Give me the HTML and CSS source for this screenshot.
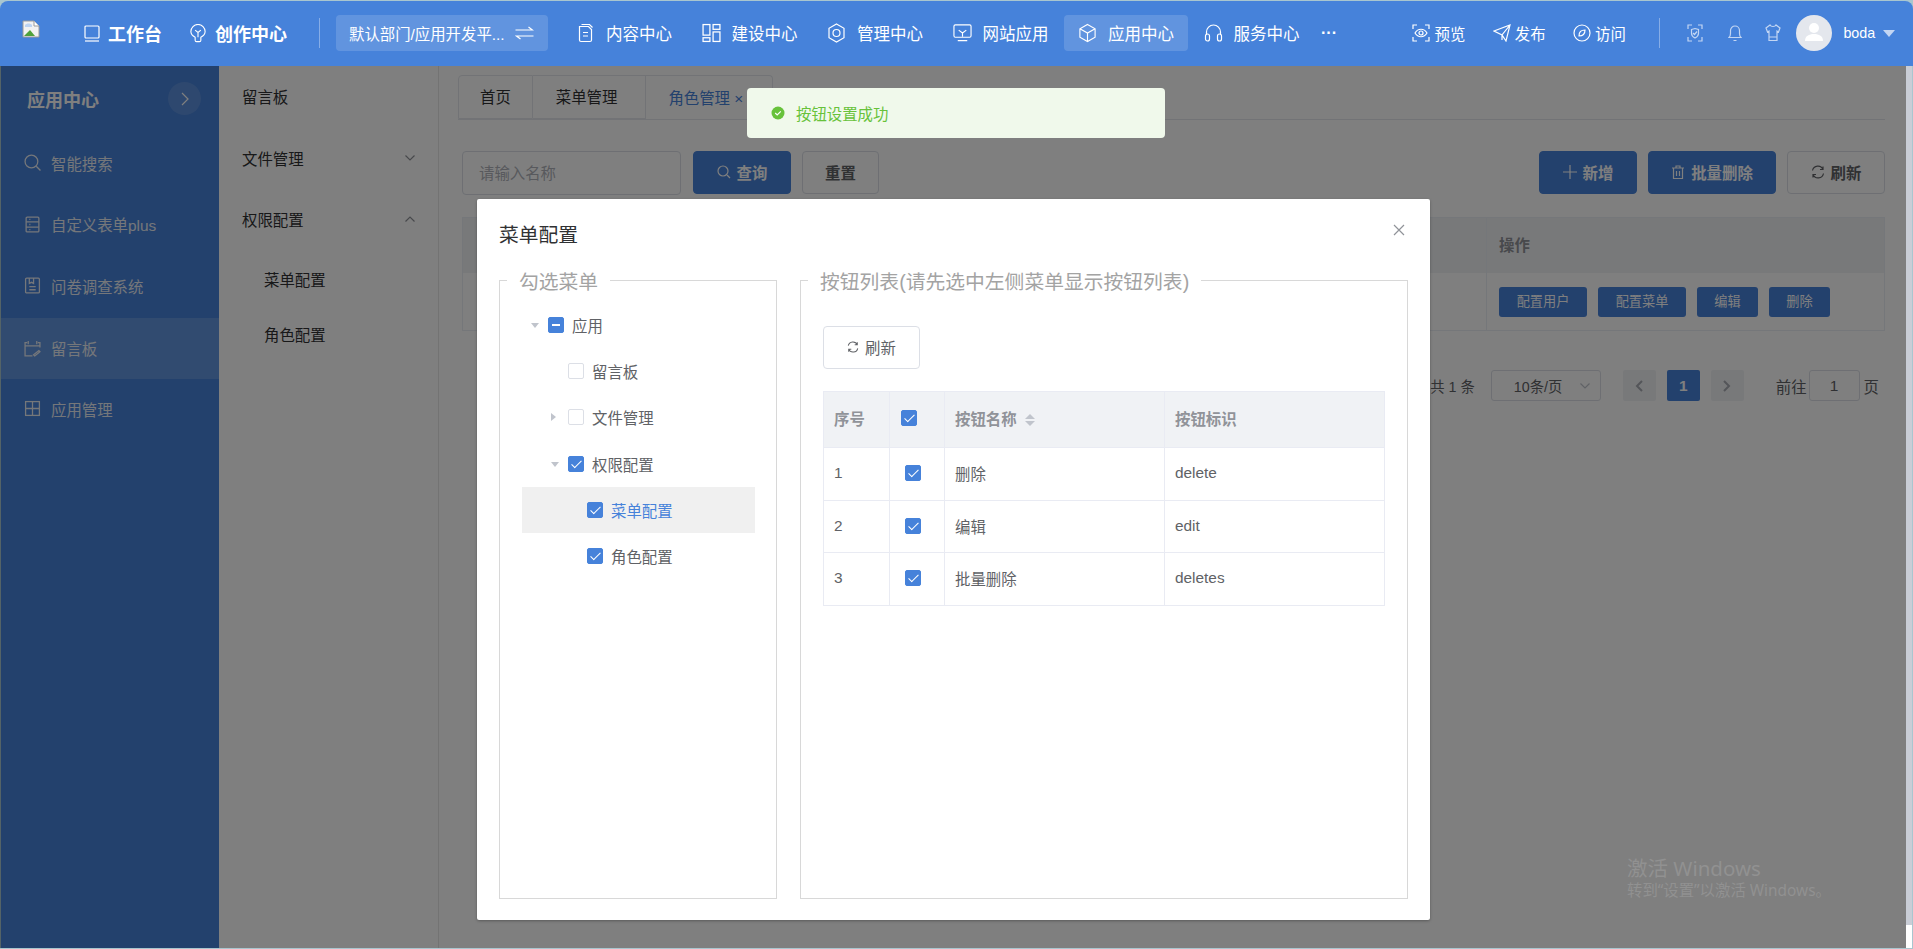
FILE: index.html
```html
<!DOCTYPE html>
<html lang="zh-CN">
<head>
    <meta charset="UTF-8">
    <title>菜单配置</title>
    <link rel="stylesheet" href="styles.css">
</head>
<body>
<div class="app">
    <header class="topbar">
        <svg class="logo" viewBox="0 0 18 18" width="18" height="18"><path d="M1 1h11l5 5v11H1z" fill="#f2f2f2" stroke="#9a9a9a"/><path d="M12 1v5h5" fill="#fff" stroke="#9a9a9a"/><path d="M2 16l6-6 5 6z" fill="#4fa13c"/><path d="M3 5c2-2 5-2 7 0v2H3z" fill="#bcd3f2"/></svg>
        <a class="top-main first"><svg class="ic" viewBox="0 0 18 18"><rect x="2" y="1.500" width="14" height="12" rx="1"/><path d="M2 16.500h14"/></svg>工作台</a>
        <a class="top-main"><svg class="ic" viewBox="0 0 18 20"><path d="M6 17v-3C3 12.500 1.500 10 1.500 8a7.500 7.500 0 0 1 15 0c0 2-1.500 4.500-4.500 6v3a1.500 1.500 0 0 1-1.500 1.500h-3A1.500 1.500 0 0 1 6 17zM9 14V9M6 6.500L9 9l3-2.500"/></svg>创作中心</a>
        <span class="top-line"></span>
        <div class="dept"><span>默认部门/应用开发平...</span><svg class="ic" viewBox="0 0 18 14"><path d="M0 4h17l-4-3M18 10H1l4 3"/></svg></div>
        <nav class="top-nav">
            <a><svg class="ic" viewBox="0 0 18 20"><path d="M3 3.500h9l3 3V17a1.500 1.500 0 0 1-1.500 1.500h-9A1.500 1.500 0 0 1 3 17zM5 1.500h8l3 3M6.500 9.500h5M6.500 13h5"/></svg>内容中心</a>
            <a><svg class="ic" viewBox="0 0 18 18"><rect x="1" y="1" width="6.500" height="10"/><rect x="10.500" y="1" width="6.500" height="4.500"/><rect x="1" y="13.500" width="6.500" height="3.500"/><rect x="10.500" y="8" width="6.500" height="9"/></svg>建设中心</a>
            <a><svg class="ic" viewBox="0 0 18 20"><path d="M9 1l7.500 4.300v9.400L9 19l-7.500-4.300V5.300z"/><circle cx="9" cy="10" r="3.500"/></svg>管理中心</a>
            <a><svg class="ic" viewBox="0 0 20 20"><rect x="1" y="1.500" width="18" height="13" rx="1.500"/><path d="M6 7l4 3 4-3M10 10v4M5 18h10"/></svg>网站应用</a>
            <a class="on"><svg class="ic" viewBox="0 0 20 20"><path d="M10 1l8 4.500v9L10 19l-8-4.500v-9zM2 5.500l8 4.500 8-4.500M10 10v9"/></svg>应用中心</a>
            <a><svg class="ic" viewBox="0 0 18 20"><path d="M2 12V9a7 7 0 0 1 14 0v3"/><rect x="1" y="11" width="4" height="7" rx="2"/><rect x="13" y="11" width="4" height="7" rx="2"/></svg>服务中心</a>
            <span class="dots">···</span>
        </nav>
        <div class="top-tools">
            <a><svg class="ic" viewBox="0 0 18 18"><path d="M1 5V1h4M13 1h4v4M17 13v4h-4M5 17H1v-4M3 9c3-5 9-5 12 0-3 5-9 5-12 0z"/><circle cx="9" cy="9" r="2"/></svg>预览</a>
            <a><svg class="ic" viewBox="0 0 18 18"><path d="M1 7L17 1l-4 16-4-6zM17 1L9 11v5"/></svg>发布</a>
            <a><svg class="ic" viewBox="0 0 18 18"><circle cx="9" cy="9" r="8"/><path d="M6 12c0-4 2-6 6-6 0 4-2 6-6 6z"/></svg>访问</a>
        </div>
        <span class="top-line second"></span>
        <svg class="ic dim shield" viewBox="0 0 16 18"><path d="M1 5V1h4M11 1h4v4M15 13v4h-4M5 17H1v-4M4.500 5.500L8 4.500l3.500 1v4C11.500 12 10 13 8 14c-2-1-3.500-2-3.500-4.500zM6 9l1.500 1.500L10 7.500"/></svg>
        <svg class="ic dim bell" viewBox="0 0 14 18"><path d="M1 13.500c1-1 1.500-2 1.500-4V6.500a4.500 4.500 0 0 1 9 0v3c0 2 .5 3 1.500 4zM5.500 16.500h3"/></svg>
        <svg class="ic dim shirt" viewBox="0 0 16 18"><path d="M5 1L1 4l1.500 4L4 7v9.500h8V7l1.500 1L15 4l-4-3c-1 2-5 2-6 0zM4 13h8"/></svg>
        <span class="avatar"><svg viewBox="0 0 36 36" width="36" height="36"><circle cx="18" cy="13" r="5" fill="#fff"/><path d="M9 26c0-5 4-7 9-7s9 2 9 7z" fill="#fff"/></svg></span>
        <span class="user">boda</span>
        <span class="caret"></span>
    </header>

    <div class="main">
        <aside class="side">
            <div class="side-head"><b>应用中心</b><span class="side-toggle"><svg class="ic" viewBox="0 0 8 14"><path d="M1 1l6 6-6 6"/></svg></span></div>
            <a><svg class="ic" viewBox="0 0 16 16"><circle cx="7" cy="7" r="6"/><path d="M11.500 11.500L15.500 15.500"/></svg>智能搜索</a>
            <a><svg class="ic" viewBox="0 0 16 16"><rect x="2" y="1" width="12" height="14" rx="1"/><path d="M2 5.500h12M2 10.500h12M5 3.200h1M5 8h1M5 12.800h1"/></svg>自定义表单plus</a>
            <a><svg class="ic" viewBox="0 0 16 16"><rect x="1.500" y="1" width="13" height="14" rx="1"/><path d="M5 1v5l2-1 2 1V1M5 9h6M5 12h6"/></svg>问卷调查系统</a>
            <a class="on"><svg class="ic" viewBox="0 0 16 16"><path d="M1 8V2.500h2M13 2.500h2V7M1 5.500h14M4 1v3M12 1v3M1 5v10h7M10 15l5-4-1-1-5 4z"/></svg>留言板</a>
            <a><svg class="ic" viewBox="0 0 16 16"><rect x="1.500" y="1.500" width="13" height="13"/><path d="M1.500 8h13M8 1.500v13"/></svg>应用管理</a>
        </aside>

        <aside class="sub">
            <a>留言板</a>
            <a>文件管理<svg class="ic" viewBox="0 0 10 6"><path d="M.5.500L5 5 9.500.500"/></svg></a>
            <a>权限配置<svg class="ic" viewBox="0 0 10 6"><path d="M.5 5.500L5 1l4.500 4.500"/></svg></a>
            <a class="child">菜单配置</a>
            <a class="child">角色配置</a>
        </aside>

        <section class="content">
            <div class="tabs">
                <span>首页</span><span>菜单管理</span><span class="cur">角色管理 ×</span>
            </div>
            <div class="toolbar">
                <span class="input">请输入名称</span>
                <span class="btn primary search"><svg class="ic" viewBox="0 0 14 14"><circle cx="6" cy="6" r="5"/><path d="M10 10l3 3"/></svg>查询</span>
                <span class="btn">重置</span>
                <span class="btn primary wide push"><svg class="ic" viewBox="0 0 14 14"><path d="M7 0v14M0 7h14"/></svg>新增</span>
                <span class="btn primary wide2"><svg class="ic" viewBox="0 0 14 14"><path d="M1 3h12M5 3V1h4v2M2.500 3v10.500h9V3M5.500 6v5M8.500 6v5"/></svg>批量删除</span>
                <span class="btn wide"><svg class="ic" viewBox="0 0 14 14"><path d="M1.500 5.500A5.500 5.500 0 0 1 12 4.500M12.500 8.500A5.500 5.500 0 0 1 2 9.500M12 1.500v3H9M2 12.500v-3h3"/></svg>刷新</span>
            </div>
            <div class="role-table">
                <div class="role-head"><span class="role-check"></span><span class="role-op">操作</span></div>
                <div class="role-row"><span class="role-check"></span>
                    <span class="role-op">
                        <i class="mini w88">配置用户</i><i class="mini w88">配置菜单</i><i class="mini w61">编辑</i><i class="mini w61">删除</i>
                    </span>
                </div>
            </div>
            <div class="pager">
                <span class="total">共 1 条</span>
                <span class="size">10条/页<svg class="ic" viewBox="0 0 10 6"><path d="M.5.500L5 5 9.500.500"/></svg></span>
                <span class="page"><svg class="ic" viewBox="0 0 8 12"><path d="M7 1L2 6l5 5"/></svg></span>
                <span class="page cur">1</span>
                <span class="page"><svg class="ic" viewBox="0 0 8 12"><path d="M1 1l5 5-5 5"/></svg></span>
                <span class="goto">前往</span><span class="page-input">1</span><span>页</span>
            </div>
        </section>

        <div class="mask">
            <div class="activate"><p>激活 Windows</p><p class="small">转到“设置”以激活 Windows。</p></div>
            <div class="message"><svg viewBox="0 0 14 14" width="14" height="14"><circle cx="7" cy="7" r="6.500" fill="#67c23a"/><path d="M4.200 7l2 2 3.600-3.600" fill="none" stroke="#fff" stroke-width="1.200"/></svg>按钮设置成功</div>
            <div class="dialog">
                <div class="dialog-head"><span>菜单配置</span><svg class="ic" viewBox="0 0 12 12"><path d="M1 1l10 10M11 1L1 11"/></svg></div>
                <div class="dialog-body">
                    <fieldset class="menu-box">
                        <legend>勾选菜单</legend>
                        <ul class="tree">
                            <li class="lv1"><i class="arrow down"></i><i class="cb half"></i>应用</li>
                            <li class="lv2"><i class="arrow none"></i><i class="cb"></i>留言板</li>
                            <li class="lv2"><i class="arrow right"></i><i class="cb"></i>文件管理</li>
                            <li class="lv2"><i class="arrow down"></i><i class="cb checked"></i>权限配置</li>
                            <li class="lv3 cur"><i class="arrow none"></i><i class="cb checked"></i>菜单配置</li>
                            <li class="lv3"><i class="arrow none"></i><i class="cb checked"></i>角色配置</li>
                        </ul>
                    </fieldset>
                    <fieldset class="btn-box">
                        <legend>按钮列表(请先选中左侧菜单显示按钮列表)</legend>
                        <span class="btn refresh"><svg class="ic" viewBox="0 0 14 14"><path d="M1.500 5.500A5.500 5.500 0 0 1 12 4.500M12.500 8.500A5.500 5.500 0 0 1 2 9.500M12 1.500v3H9M2 12.500v-3h3"/></svg>刷新</span>
                        <table class="btn-table">
                            <thead>
                                <tr><th class="c1">序号</th><th class="c2"><i class="cb checked"></i></th><th class="c3">按钮名称<span class="sort"><i></i><i></i></span></th><th>按钮标识</th></tr>
                            </thead>
                            <tbody>
                                <tr><td>1</td><td class="mid"><i class="cb checked"></i></td><td>删除</td><td>delete</td></tr>
                                <tr><td>2</td><td class="mid"><i class="cb checked"></i></td><td>编辑</td><td>edit</td></tr>
                                <tr><td>3</td><td class="mid"><i class="cb checked"></i></td><td>批量删除</td><td>deletes</td></tr>
                            </tbody>
                        </table>
                    </fieldset>
                </div>
            </div>
        </div>
        <div class="scroll"><span></span></div>
    </div>
</div>
</body>
</html>
```
FILE: styles.css
```css
* { box-sizing: border-box; }
html, body { margin: 0; height: 100%; overflow: hidden; }
body { background: #a9c6cf; font-family: "Liberation Sans", "Noto Sans CJK SC", sans-serif; font-size: 15.4px; color: #606266; }
a { display: flex; align-items: center; }
i { font-style: normal; }
p { margin: 0; }
.ic { fill: none; stroke: currentColor; stroke-width: 1.2; flex: none; display: block; }

.app { height: 949px; padding: 1px; display: flex; flex-direction: column; }

/* top bar */
.topbar { height: 65px; flex: none; background: #4682da; border-radius: 8px 8px 0 0; margin: 0 -1px; padding: 0 0 1px 22px; display: flex; align-items: center; color: #fff; font-size: 16.500px; white-space: nowrap; position: relative; z-index: 5; }
.logo { flex: none; margin-top: -8px; }
.top-main { font-size: 18px; font-weight: 700; margin-left: 27px; }
.top-main.first { margin-left: 43px; }
.top-main .ic { width: 18px; height: 19px; margin-right: 7px; }
.top-main + .top-main .ic { margin-right: 8px; }
.top-line { width: 1px; height: 30px; background: rgba(255, 255, 255, .35); margin-left: 32px; flex: none; }
.dept { width: 212px; height: 36px; margin-left: 16px; padding: 0 14px 0 13px; background: rgba(255, 255, 255, .15); border-radius: 4px; display: flex; align-items: center; justify-content: space-between; font-size: 15.400px; }
.dept .ic { width: 19px; height: 14px; }
.top-nav { display: flex; align-items: center; margin-left: 14px; }
.top-nav a { height: 36px; padding: 0 14px; margin-right: 1.500px; border-radius: 4px; }
.top-nav a.on { background: rgba(255, 255, 255, .15); }
.top-nav .ic { width: 19px; height: 20px; margin-right: 11px; }
.dots { font-size: 16px; font-weight: 700; margin-left: 6px; }
.top-tools { display: flex; margin-left: 75.500px; font-size: 15.400px; }
.top-tools a { margin-right: 27.500px; }
.top-tools .ic { width: 18px; height: 18px; margin-right: 4px; }
.top-line.second { margin-left: 6px; }
.dim { color: #c3d6f3; width: 16px; height: 18px; }
.shield { margin-left: 27px; }
.bell { margin-left: 25px; width: 14px; }
.shirt { margin-left: 23px; }
.avatar { width: 36px; height: 36px; margin-left: 15px; border-radius: 50%; background: #e4e7ed; flex: none; }
.user { font-size: 14.300px; margin-left: 11px; }
.caret { margin-left: 8px; border: 6px solid transparent; border-top: 7px solid #c3d6f3; border-bottom: 0; }

.main { flex: 1; display: flex; position: relative; min-height: 0; background: #fff; }

/* left menus */
.side { width: 218px; flex: none; background: #4682da; color: #fff; }
.side-head { height: 66px; padding: 0 18px 0 26px; display: flex; align-items: center; justify-content: space-between; font-size: 18px; }
.side-toggle { width: 33px; height: 33px; border-radius: 50%; background: rgba(255, 255, 255, .12); display: flex; align-items: center; justify-content: center; margin-top: -1px; }
.side-toggle .ic { width: 8px; height: 14px; }
.side a { height: 61.500px; padding-left: 23px; color: #eaeef5; }
.side a .ic { width: 17px; height: 17px; margin-right: 10px; }
.side a.on { background: rgba(255, 255, 255, .16); margin-top: 1px; margin-bottom: -1px; }
.sub { width: 220px; flex: none; background: #fff; border-right: 1px solid #e6e6e6; color: #303133; }
.sub a { height: 61px; padding: 0 23px; justify-content: space-between; }
.sub a:first-child { height: 60px; margin-bottom: 1px; }
.sub a:nth-child(3) { margin-bottom: 2px; }
.sub .ic { width: 10px; height: 6px; color: #909399; }
.sub a.child { height: 55px; padding-left: 45px; }

/* page behind the dialog */
.content { flex: 1; padding: 9px 21px 0 19px; min-width: 0; }
.tabs { display: flex; height: 45px; border-bottom: 1px solid #e4e7ed; }
.tabs span { height: 44px; padding: 0 28px 2px 23px; display: flex; align-items: center; border: 1px solid #e4e7ed; border-left: 0; color: #303133; }
.tabs span:first-child { border-left: 1px solid #e4e7ed; border-radius: 4px 0 0 0; padding: 0 21px 2px; }
.tabs span.cur { color: #4682da; border-bottom: 0; border-radius: 0 4px 0 0; width: 127px; padding: 0 0 2px 22px; white-space: nowrap; }
.toolbar { margin-top: 31px; margin-left: 4px; display: flex; align-items: flex-start; gap: 11px; }
.input { width: 219px; height: 44px; padding: 0 0 2px 16px; margin-right: 1px; border: 1px solid #dcdfe6; border-radius: 4px; display: flex; align-items: center; color: #b0b3ba; }
.btn { height: 43px; min-width: 77px; padding: 0 20px 2px; border: 1px solid #dcdfe6; border-radius: 4px; display: flex; align-items: center; justify-content: center; background: #fff; color: #606266; font-weight: 700; }
.btn .ic { width: 14px; height: 14px; margin-right: 6px; }
.btn.primary { background: #4682da; border-color: #4682da; color: #fff; }
.btn.search, .btn.wide { width: 98px; padding: 0 0 2px; }
.btn.wide2 { width: 128px; padding: 0 0 2px; }
.push { margin-left: auto; }
.role-table { margin-top: 22px; margin-left: 4px; border: 1px solid #ebeef5; }
.role-head { height: 55px; background: #f0f2f5; display: flex; }
.role-head .role-op { padding-bottom: 3px; }
.role-row { height: 57px; display: flex; }
.role-check { flex: 1; }
.role-op { width: 398px; padding-left: 12px; border-left: 1px solid #ebeef5; display: flex; align-items: center; gap: 11px; font-weight: 700; color: #909399; }
.mini { height: 30px; padding-bottom: 2px; border-radius: 3px; background: #4682da; color: #fff; font-size: 13.200px; font-weight: 400; display: flex; align-items: center; justify-content: center; }
.w88 { width: 88px; }
.w61 { width: 61px; }
.pager { margin-top: 39px; display: flex; justify-content: flex-end; align-items: center; color: #606266; padding-right: 6px; }
.total { font-size: 14.300px; }
.size { width: 110px; height: 31px; margin: 0 22px 0 16px; padding: 0 10px 0 22px; border: 1px solid #dcdfe6; border-radius: 3px; display: flex; align-items: center; justify-content: space-between; font-size: 14.300px; }
.size .ic { width: 10px; height: 6px; color: #c0c4cc; }
.page { width: 33px; height: 31px; margin-right: 11px; border-radius: 2px; background: #f0f2f5; color: #a8abb2; display: flex; align-items: center; justify-content: center; font-weight: 700; }
.page .ic { width: 8px; height: 12px; stroke-width: 2; }
.page.cur { background: #4682da; color: #fff; }
.goto { margin-left: 21px; margin-right: 2px; }
.page-input { width: 51px; height: 31px; margin-right: 4px; border: 1px solid #dcdfe6; border-radius: 3px; display: flex; align-items: center; justify-content: center; }

.scroll { width: 6px; flex: none; background: #fff; padding-bottom: 23px; }
.scroll span { display: block; height: 100%; background: #c9cdd6; }

/* mask, toast, dialog */
.mask { position: absolute; left: -1px; top: 0; right: 6px; bottom: 0; background: rgba(0, 0, 0, .5); }
.activate { position: absolute; left: 1627px; top: 790px; color: #919191; font-family: "Noto Sans", "Noto Sans CJK SC", sans-serif; font-size: 20.500px; line-height: 25px; white-space: nowrap; }
.activate .small { font-size: 15.400px; line-height: 20px; }
.message { position: absolute; left: 747px; top: 22px; width: 418px; height: 50px; padding: 0 0 1px 24px; border-radius: 4px; background: #f0f9eb; color: #67c23a; display: flex; align-items: center; gap: 11px; z-index: 2; }
.dialog { width: 953px; height: 721px; margin: 133px 0 0 477px; background: #fff; border-radius: 2px; box-shadow: 0 1px 3px rgba(0, 0, 0, .3); padding: 0 22px 21px; display: flex; flex-direction: column; }
.dialog-head { height: 66px; flex: none; display: flex; align-items: center; justify-content: space-between; padding: 3px 0 0; font-size: 19.800px; color: #303133; }
.dialog-head .ic { width: 12px; height: 12px; color: #909399; margin: 0 3px 8px 0; }
.dialog-body { flex: 1; display: flex; gap: 23px; min-height: 0; }
fieldset { margin: 0; padding: 0; border: 1px solid #d8d8d8; min-width: 0; height: 100%; }
legend { margin-left: -15px; padding: 4px 12px 0; font-size: 19.800px; color: #a3a3a3; line-height: 26px; }
.menu-box { width: 278px; padding: 0 21px 0 22px; }
.btn-box { flex: 1; padding: 0 22px; }
.tree { list-style: none; margin: 7px 0 0; padding: 0; color: #606266; }
.tree li { height: 46.200px; display: flex; align-items: center; }
.tree li.cur { background: #f0f0f0; color: #4682da; }
.lv1 { padding-left: 9px; }
.lv2 { padding-left: 29px; }
.lv3 { padding-left: 48px; }
.arrow { width: 8px; height: 8px; margin-right: 9px; flex: none; }
.arrow.down { border: 4px solid transparent; border-top: 5px solid #c0c4cc; border-bottom: 0; margin-top: 1px; height: 5px; }
.arrow.right { border: 4px solid transparent; border-left: 5px solid #c0c4cc; border-right: 0; width: 5px; margin-right: 12px; }
.cb { width: 16px; height: 16px; margin-right: 8px; flex: none; display: block; border: 1px solid #dcdfe6; border-radius: 2px; background: #fff; position: relative; }
.cb.checked, .cb.half { background: #4682da; border-color: #4682da; }
.cb.checked::after { content: ""; position: absolute; left: 4.500px; top: 1px; width: 4px; height: 9px; border: solid #fff; border-width: 0 1px 1px 0; transform: rotate(45deg); }
.cb.half::after { content: ""; position: absolute; left: 3px; right: 3px; top: 6px; height: 2px; background: #fff; }
.refresh { width: 97px; height: 43px; margin-top: 31px; padding: 0 0 2px; font-weight: 400; }
.refresh .ic { width: 12px; height: 12px; }
.btn-table { width: 562px; margin-top: 22px; border-collapse: collapse; table-layout: fixed; color: #606266; }
.btn-table th, .btn-table td { border: 1px solid #e9ebf3; padding: 0 0 2px 10px; text-align: left; }
.btn-table th { height: 56px; padding-bottom: 4px; background: #f0f2f5; color: #909399; font-weight: 700; }
.btn-table td { height: 52.700px; }
.c1 { width: 66px; }
.c2 { width: 55px; }
.c3 { width: 220px; }
th.c2 .cb { margin: 0 0 0 1px; }
td.mid .cb { margin: 0 0 0 5px; }
.sort { display: inline-block; vertical-align: middle; margin-left: 8px; }
.sort i { display: block; border: 5px solid transparent; border-top: 0; border-bottom: 5px solid #c0c4cc; margin-bottom: 2px; }
.sort i + i { border-bottom: 0; border-top: 5px solid #c0c4cc; margin: 0; }
```
